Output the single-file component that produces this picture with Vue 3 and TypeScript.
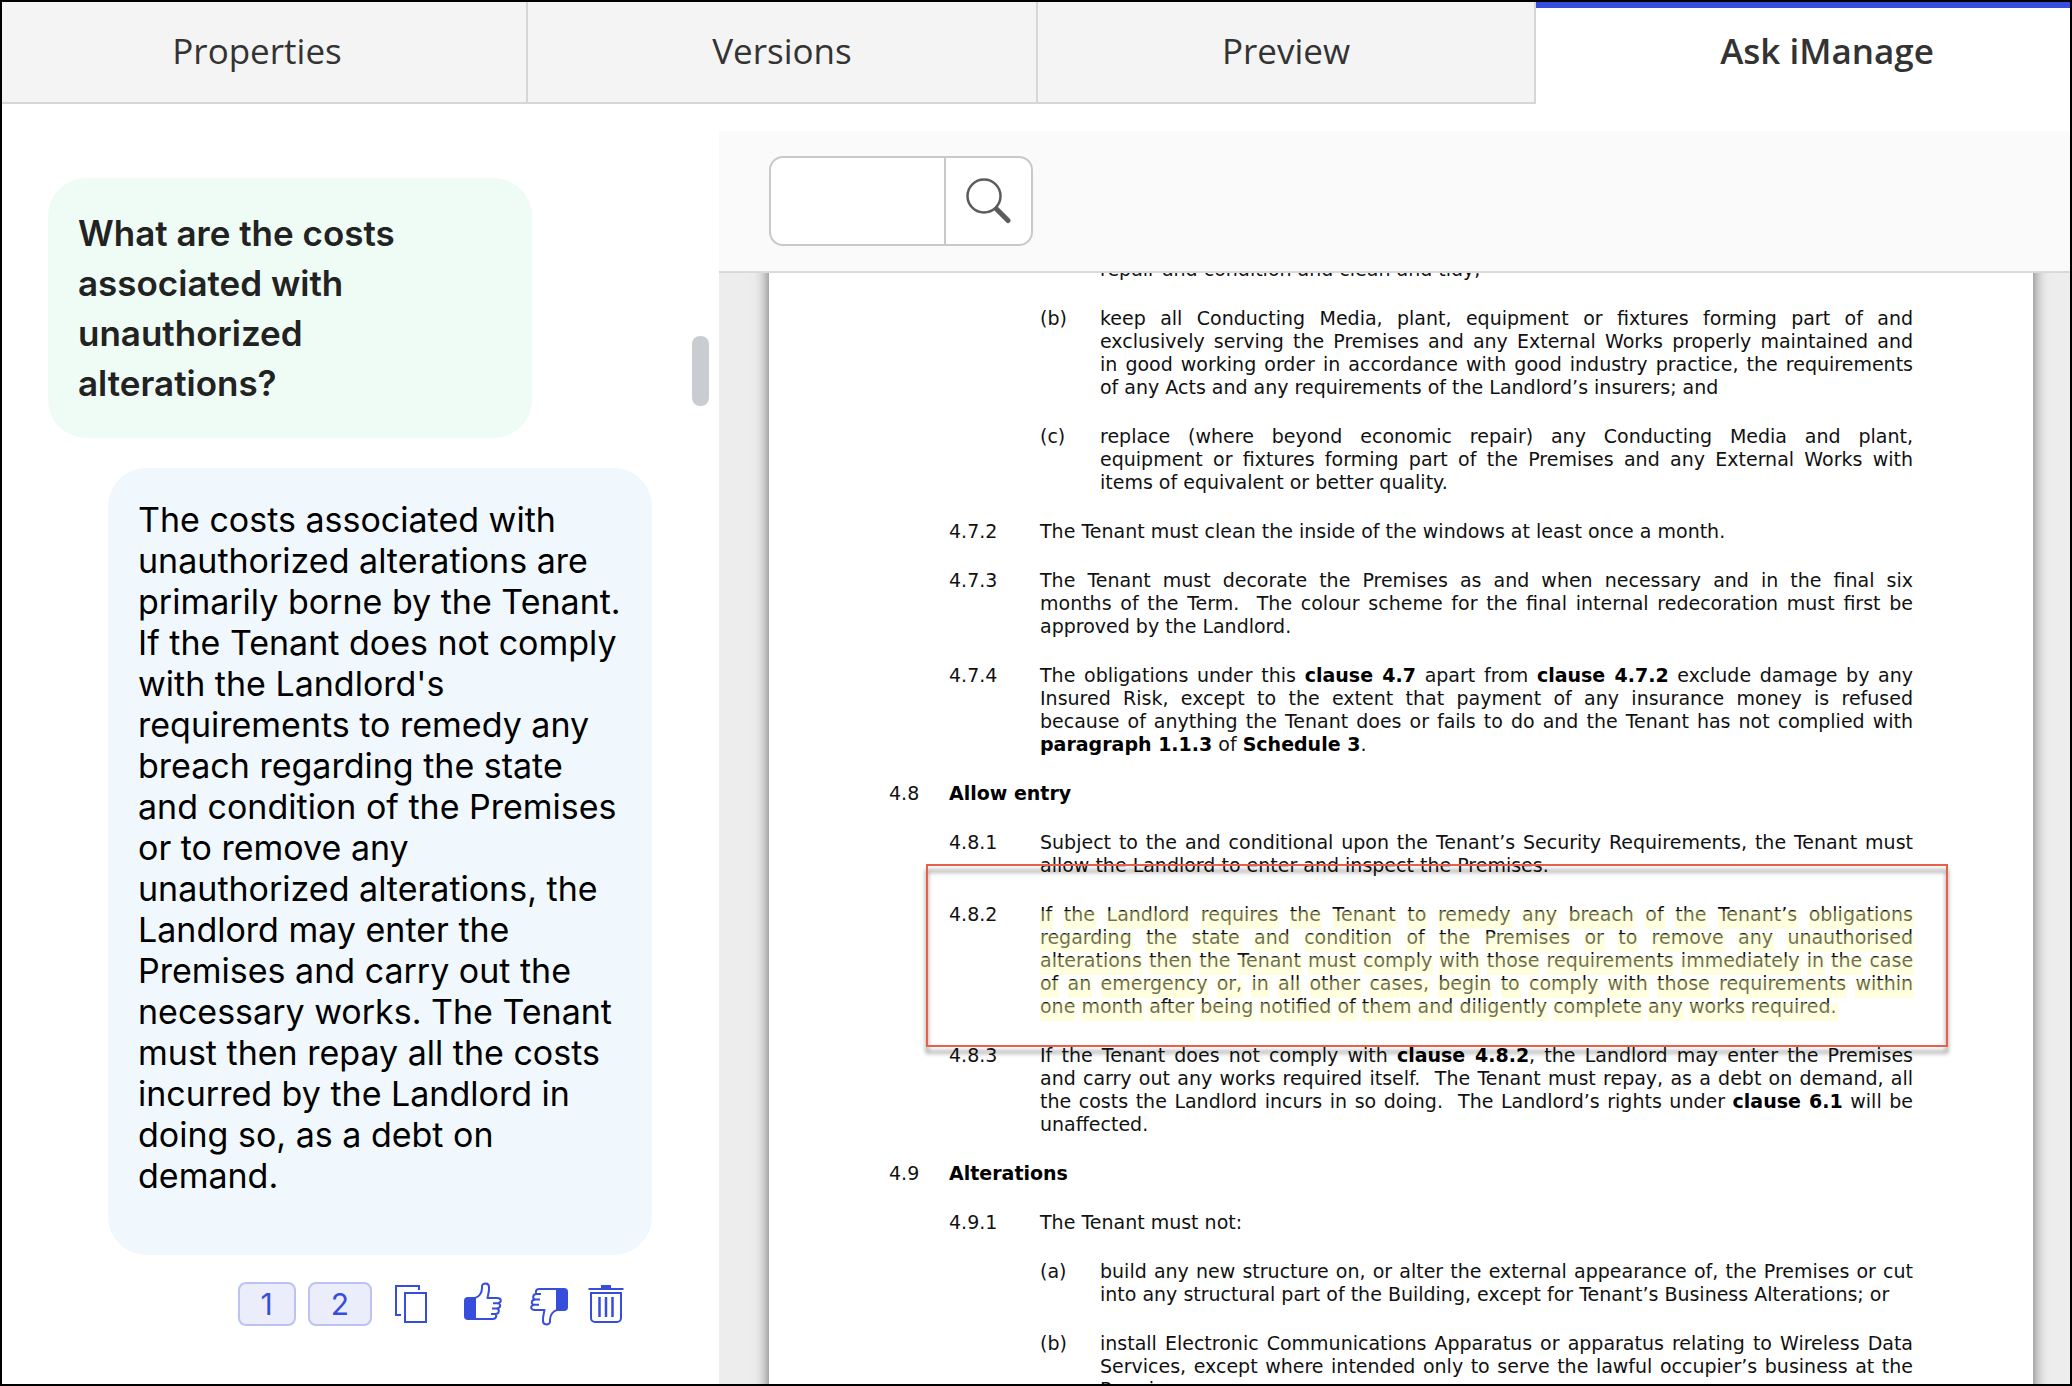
<script setup lang="ts">
import { ref } from 'vue'

interface Tab {
  id: string
  label: string
}

interface Segment {
  text: string
  bold: boolean
}

interface Clause {
  no: string
  level: 1 | 2 | 3
  lines: string[]
  heading?: boolean
  cited?: boolean
}

const tabs: Tab[] = [
  { id: 'properties', label: 'Properties' },
  { id: 'versions', label: 'Versions' },
  { id: 'preview', label: 'Preview' },
  { id: 'ask', label: 'Ask iManage' },
]
const activeTab = ref('ask')
const query = ref('')

const question = ['What are the costs', 'associated with', 'unauthorized', 'alterations?'].join('\n')

const answer = [
  'The costs associated with',
  'unauthorized alterations are',
  'primarily borne by the Tenant.',
  'If the Tenant does not comply',
  "with the Landlord's",
  'requirements to remedy any',
  'breach regarding the state',
  'and condition of the Premises',
  'or to remove any',
  'unauthorized alterations, the',
  'Landlord may enter the',
  'Premises and carry out the',
  'necessary works. The Tenant',
  'must then repay all the costs',
  'incurred by the Landlord in',
  'doing so, as a debt on',
  'demand.',
].join('\n')

const citations = [1, 2]

// Asterisks mark bold cross-references inside a line.
const clauses: Clause[] = [
  { no: '', level: 3, lines: ['repair and condition and clean and tidy;'] },
  {
    no: '(b)',
    level: 3,
    lines: [
      'keep all Conducting Media, plant, equipment or fixtures forming part of and',
      'exclusively serving the Premises and any External Works properly maintained and',
      'in good working order in accordance with good industry practice, the requirements',
      'of any Acts and any requirements of the Landlord’s insurers; and',
    ],
  },
  {
    no: '(c)',
    level: 3,
    lines: [
      'replace (where beyond economic repair) any Conducting Media and plant,',
      'equipment or fixtures forming part of the Premises and any External Works with',
      'items of equivalent or better quality.',
    ],
  },
  { no: '4.7.2', level: 2, lines: ['The Tenant must clean the inside of the windows at least once a month.'] },
  {
    no: '4.7.3',
    level: 2,
    lines: [
      'The Tenant must decorate the Premises as and when necessary and in the final six',
      'months of the Term.\u00a0 The colour scheme for the final internal redecoration must first be',
      'approved by the Landlord.',
    ],
  },
  {
    no: '4.7.4',
    level: 2,
    lines: [
      'The obligations under this *clause 4.7* apart from *clause 4.7.2* exclude damage by any',
      'Insured Risk, except to the extent that payment of any insurance money is refused',
      'because of anything the Tenant does or fails to do and the Tenant has not complied with',
      '*paragraph 1.1.3* of *Schedule 3*.',
    ],
  },
  { no: '4.8', level: 1, heading: true, lines: ['Allow entry'] },
  {
    no: '4.8.1',
    level: 2,
    lines: [
      'Subject to the and conditional upon the Tenant’s Security Requirements, the Tenant must',
      'allow the Landlord to enter and inspect the Premises.',
    ],
  },
  {
    no: '4.8.2',
    level: 2,
    cited: true,
    lines: [
      'If the Landlord requires the Tenant to remedy any breach of the Tenant’s obligations',
      'regarding the state and condition of the Premises or to remove any unauthorised',
      'alterations then the Tenant must comply with those requirements immediately in the case',
      'of an emergency or, in all other cases, begin to comply with those requirements within',
      'one month after being notified of them and diligently complete any works required.',
    ],
  },
  {
    no: '4.8.3',
    level: 2,
    lines: [
      'If the Tenant does not comply with *clause 4.8.2*, the Landlord may enter the Premises',
      'and carry out any works required itself.\u00a0 The Tenant must repay, as a debt on demand, all',
      'the costs the Landlord incurs in so doing.\u00a0 The Landlord’s rights under *clause 6.1* will be',
      'unaffected.',
    ],
  },
  { no: '4.9', level: 1, heading: true, lines: ['Alterations'] },
  { no: '4.9.1', level: 2, lines: ['The Tenant must not:'] },
  {
    no: '(a)',
    level: 3,
    lines: [
      'build any new structure on, or alter the external appearance of, the Premises or cut',
      'into any structural part of the Building, except for Tenant’s Business Alterations; or',
    ],
  },
  {
    no: '(b)',
    level: 3,
    lines: [
      'install Electronic Communications Apparatus or apparatus relating to Wireless Data',
      'Services, except where intended only to serve the lawful occupier’s business at the',
      'Premises',
    ],
  },
]

function segments(line: string): Segment[] {
  return line
    .split('*')
    .map((text, i) => ({ text, bold: i % 2 === 1 }))
    .filter((s) => s.text.length > 0)
}
</script>

<template>
  <div class="app">
    <nav class="tabs" role="tablist">
      <button
        v-for="tab in tabs"
        :key="tab.id"
        type="button"
        role="tab"
        class="tab"
        :class="[tab.id, { active: tab.id === activeTab }]"
        :aria-selected="tab.id === activeTab"
        @click="activeTab = tab.id"
      >
        {{ tab.label }}
      </button>
    </nav>

    <main class="content">
      <section class="chat" aria-label="Conversation">
        <div class="thread">
          <p class="bubble question">{{ question }}</p>
          <p class="bubble answer">{{ answer }}</p>
          <div class="actions">
            <button v-for="n in citations" :key="n" type="button" class="cite">{{ n }}</button>
            <button type="button" class="icon copy" aria-label="Copy">
              <svg width="32" height="38" viewBox="0 0 32 38" fill="none" stroke="currentColor" stroke-width="2">
                <path d="M24 5V1H1v29h5" />
                <rect x="10" y="8" width="21" height="29" />
              </svg>
            </button>
            <button type="button" class="icon up" aria-label="Helpful">
              <svg width="38" height="40" viewBox="0 0 38 40" fill="none" stroke="currentColor" stroke-width="2" stroke-linejoin="round">
                <path
                  d="M11 16C15 15 18 11 18 6V4.500C18 .500 25 .500 25 5C25.500 9 24 13 23.500 16H33C38 16 38 21 33.500 21.200H29M33.500 21.200C37.500 21.500 37 26.500 32.500 26.500H28M32.500 26.500C36 27 35.500 32 31.500 32H27M31.500 32C33 34 32 37 29 37H11"
                />
                <path d="M12 15H4a4 4 0 0 0-4 4v15a4 4 0 0 0 4 4h8z" fill="currentColor" stroke="none" />
              </svg>
            </button>
            <button type="button" class="icon down" aria-label="Not helpful">
              <svg width="38" height="40" viewBox="0 0 38 40" fill="none" stroke="currentColor" stroke-width="2" stroke-linejoin="round">
                <g transform="rotate(180 19 20)">
                  <path
                    d="M11 16C15 15 18 11 18 6V4.500C18 .500 25 .500 25 5C25.500 9 24 13 23.500 16H33C38 16 38 21 33.500 21.200H29M33.500 21.200C37.500 21.500 37 26.500 32.500 26.500H28M32.500 26.500C36 27 35.500 32 31.500 32H27M31.500 32C33 34 32 37 29 37H11"
                  />
                  <path d="M12 15H4a4 4 0 0 0-4 4v15a4 4 0 0 0 4 4h8z" fill="currentColor" stroke="none" />
                </g>
              </svg>
            </button>
            <button type="button" class="icon trash" aria-label="Delete">
              <svg width="36" height="38" viewBox="0 0 36 38" fill="none" stroke="currentColor" stroke-width="2">
                <path d="M13 0h10v3h12.500v2H.500V3H13z" fill="currentColor" stroke="none" />
                <path d="M3 8h30v25a4 4 0 0 1-4 4H7a4 4 0 0 1-4-4z" />
                <path d="M11.500 12v20M18 12v20M24.500 12v20" stroke-width="2.500" />
              </svg>
            </button>
          </div>
        </div>
        <div class="scrollbar"><span class="thumb"></span></div>
      </section>

      <section class="viewer" aria-label="Document">
        <form class="toolbar" role="search" @submit.prevent>
          <div class="search">
            <input v-model="query" type="text" aria-label="Search in document" />
            <button type="submit" aria-label="Search">
              <svg width="46" height="46" viewBox="0 0 46 46" fill="none" stroke="#5c5c5c">
                <circle cx="18" cy="18" r="16.500" stroke-width="2.500" />
                <path d="M30.500 31L42 42.500" stroke-width="5" stroke-linecap="round" />
              </svg>
            </button>
          </div>
        </form>

        <div class="canvas">
          <article class="page">
            <div
              v-for="(clause, i) in clauses"
              :key="i"
              class="clause"
              :class="['level-' + clause.level, { heading: clause.heading, cited: clause.cited }]"
            >
              <span class="no">{{ clause.no }}</span>
              <div class="body">
                <div v-for="(line, j) in clause.lines" :key="j" class="line">
                  <template v-if="clause.cited">
                    <template v-for="(word, k) in line.split(' ')" :key="k"
                      ><span class="hit">{{ word }}</span
                      >{{ ' ' }}</template
                    >
                  </template>
                  <template v-else>
                    <component :is="seg.bold ? 'b' : 'span'" v-for="(seg, k) in segments(line)" :key="k">{{ seg.text }}</component>
                  </template>
                </div>
              </div>
            </div>
          </article>
        </div>
      </section>
    </main>
  </div>
</template>

<style>
body {
  margin: 0;
}
</style>

<style scoped>
.app {
  box-sizing: border-box;
  height: 100vh;
  display: flex;
  flex-direction: column;
  border: 2px solid #000;
  background: #fff;
  overflow: hidden;
}

button {
  margin: 0;
  padding: 0;
  border: 0;
  background: none;
  font: inherit;
  color: inherit;
}

/* Tabs */
.tabs {
  flex: none;
  display: grid;
  grid-template-columns: 526fr 510fr 498fr 534fr;
  height: 102px;
}

.tab {
  box-sizing: border-box;
  border-right: 2px solid #d6d6d6;
  border-bottom: 2px solid #d6d6d6;
  background: #f4f4f4;
  color: #333;
  font: 400 35px/48px 'Open Sans', sans-serif;
  padding-bottom: 2px;
}

.tab.properties {
  padding-right: 14px;
}

.tab.active {
  border: 0;
  border-top: 6px solid #374ddb;
  background: #fff;
  font-weight: 600;
  padding: 0 0 10px 48px;
}

/* Panels */
.content {
  flex: 1;
  min-height: 0;
  display: flex;
}

.chat {
  flex: 717 1 0;
  min-width: 0;
  display: flex;
  justify-content: space-between;
  font-family: Inter, sans-serif;
}

.viewer {
  flex: 1351 1 0;
  min-width: 0;
  display: flex;
  flex-direction: column;
  margin-top: 27px;
}

/* Conversation */
.thread {
  width: 604px;
  margin: 74px 0 0 46px;
  display: flex;
  flex-direction: column;
}

.bubble {
  box-sizing: border-box;
  margin: 0;
  border-radius: 38px;
  white-space: pre;
}

.question {
  width: 484px;
  padding: 30px;
  background: #effcf6;
  color: #222;
  font-size: 35px;
  font-weight: 600;
  line-height: 50px;
}

.answer {
  width: 544px;
  margin-top: 30px;
  align-self: flex-end;
  padding: 31px 30px 59px;
  background: #f0f8fe;
  color: #000;
  font-size: 34px;
  line-height: 41px;
}

.actions {
  display: flex;
  align-items: flex-start;
  justify-content: flex-end;
  margin: 27px 28px 0 0;
  color: #374ddb;
}

.cite {
  box-sizing: border-box;
  height: 44px;
  margin-right: 12px;
  padding: 0 21px;
  border: 2px solid #bcc3f2;
  border-radius: 8px;
  background: #ebedfa;
  font-size: 30px;
  line-height: 40px;
}

.icon {
  display: flex;
  align-items: center;
  height: 44px;
}

.icon svg {
  display: block;
  overflow: visible;
}

.copy {
  margin: 0 37px 0 11px;
}

.up {
  align-items: flex-start;
  margin-right: 28px;
}

.down {
  align-items: flex-end;
  margin-right: 20px;
}

.scrollbar {
  padding: 232px 10px 0 0;
}

.thumb {
  display: block;
  width: 17px;
  height: 70px;
  border-radius: 8px;
  background: #c9cdd1;
}

/* Document viewer */
.toolbar {
  flex: none;
  padding: 25px 50px;
  border-bottom: 2px solid #d9d9d9;
  background: #fafafa;
}

.search {
  box-sizing: border-box;
  display: flex;
  width: 264px;
  height: 90px;
  border: 2px solid #c9c9c9;
  border-radius: 14px;
  background: #fff;
  overflow: hidden;
}

.search input {
  flex: 1;
  min-width: 0;
  padding: 0 16px;
  border: 0;
  outline: 0;
  background: none;
  font: 400 30px/40px 'Open Sans', sans-serif;
}

.search button {
  box-sizing: border-box;
  width: 87px;
  display: flex;
  align-items: center;
  justify-content: center;
  border-left: 2px solid #c9c9c9;
}

.canvas {
  flex: 1;
  min-height: 0;
  padding: 0 37px 0 50px;
  background: #ededed;
  overflow: hidden;
}

.page {
  display: flex;
  flex-direction: column;
  gap: 26px;
  margin-top: -15px;
  padding: 0 120px 60px;
  background: #fff;
  box-shadow: 0 0 14px rgba(0, 0, 0, 0.6);
  color: #111;
  font: 400 19px/23px 'DejaVu Sans', Verdana, sans-serif;
}

.clause {
  display: flex;
}

.no {
  flex: none;
}

.level-1 .no {
  width: 60px;
}

.level-2 {
  position: relative;
  margin-left: 60px;
}

.level-2 .no {
  width: 91px;
}

.level-3 {
  margin-left: 151px;
}

.level-3 .no {
  width: 60px;
}

.body {
  flex: 1;
  min-width: 0;
}

.heading .body,
.line b {
  font-weight: 700;
  color: #000;
}

.line {
  white-space: nowrap;
  text-align: justify;
  text-align-last: justify;
}

.line:last-child {
  text-align-last: left;
}

/* Cited passage: marker over each word and a frame round the clause */
.hit {
  position: relative;
}

.hit::after {
  content: '';
  position: absolute;
  inset: 8px -1px -4px 0;
  background: rgba(255, 255, 178, 0.4);
}

.cited::after {
  content: '';
  position: absolute;
  inset: -39px -35px -29px -23px;
  border: 2px solid #e8604c;
  filter: drop-shadow(0 6px 2px rgba(0, 0, 0, 0.5));
  pointer-events: none;
}
</style>
